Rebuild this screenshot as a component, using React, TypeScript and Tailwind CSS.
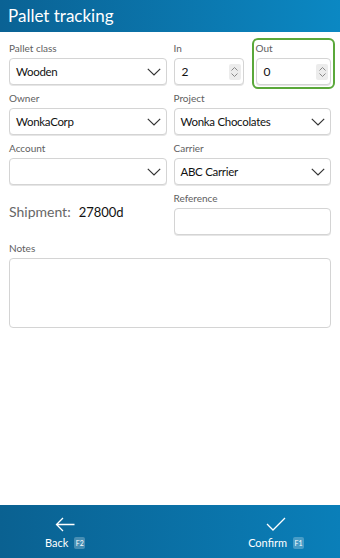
import React from 'react';

const font = { fontFamily: 'Lato, "Noto Sans", sans-serif' };

const Chevron = () => (
  <svg width="14" height="8" viewBox="0 0 14 8" fill="none" stroke="#333" strokeWidth="1.2">
    <path d="M0.8 0.8 L7 7 L13.2 0.8" />
  </svg>
);

const Spinner = () => (
  <div className="w-[12px] h-[16px] bg-[#ececec] rounded-[2px] flex flex-col items-center justify-center gap-[2px]">
    <svg width="7" height="4" viewBox="0 0 7 4" fill="none" stroke="#888" strokeWidth="1">
      <path d="M0.5 3.5 L3.5 0.5 L6.5 3.5" />
    </svg>
    <svg width="7" height="4" viewBox="0 0 7 4" fill="none" stroke="#888" strokeWidth="1">
      <path d="M0.5 0.5 L3.5 3.5 L6.5 0.5" />
    </svg>
  </div>
);

const Label = ({ children }: { children: React.ReactNode }) => (
  <div className="text-[10px] text-[#606060] leading-[14px] h-[14px] mb-[3px]">{children}</div>
);

const boxCls = 'h-[27px] border border-[#d4d4d4] rounded-[4px] bg-white flex items-center shadow-[0_1px_0_#e6e6e6]';

const Select = ({ value }: { value?: string }) => (
  <div className={`${boxCls} pl-[6px] pr-[5px] justify-between`}>
    <span className="text-[11.5px] tracking-[-0.3px] text-[#111]">{value}</span>
    <Chevron />
  </div>
);

const NumberInput = ({ value }: { value: string }) => (
  <div className={`${boxCls} pl-[7px] pr-[2px] justify-between`}>
    <span className="text-[12px] text-[#111]">{value}</span>
    <Spinner />
  </div>
);

export default function App() {
  return (
    <div className="w-[340px] h-[558px] bg-white flex flex-col" style={font}>
      <header className="h-[32px] bg-gradient-to-r from-[#0a6294] to-[#0b88c3] flex items-center px-[8px]">
        <h1 className="text-white text-[17px] leading-none pb-[1px]">Pallet tracking</h1>
      </header>

      <main className="flex-1 px-[9px] pt-[9px]">
        <div className="grid grid-cols-2 gap-x-[7px]">
          <div>
            <Label>Pallet class</Label>
            <Select value="Wooden" />
          </div>
          <div className="flex gap-[12px]">
            <div className="w-[70px]">
              <Label>In</Label>
              <NumberInput value="2" />
            </div>
            <div className="flex-1 -mt-[3px] -mx-[4px] -mb-[4px] pt-[1px] px-[2px] pb-[2px] border-2 border-[#5aa83a] rounded-[6px]">
              <Label>Out</Label>
              <NumberInput value="0" />
            </div>
          </div>

          <div className="mt-[6px]">
            <Label>Owner</Label>
            <Select value="WonkaCorp" />
          </div>
          <div className="mt-[6px]">
            <Label>Project</Label>
            <Select value="Wonka Chocolates" />
          </div>

          <div className="mt-[6px]">
            <Label>Account</Label>
            <Select />
          </div>
          <div className="mt-[6px]">
            <Label>Carrier</Label>
            <Select value="ABC Carrier" />
          </div>

          <div className="mt-[6px] flex items-start pt-[11px] leading-[20px]">
            <span className="text-[14px] text-[#666]">Shipment:</span>
            <span className="text-[13px] text-[#111] ml-[8px]">27800d</span>
          </div>
          <div className="mt-[6px]">
            <Label>Reference</Label>
            <div className={boxCls} />
          </div>
        </div>

        <div className="mt-[6px]">
          <Label>Notes</Label>
          <div className="h-[70px] border border-[#d4d4d4] rounded-[4px] bg-white" />
        </div>
      </main>

      <footer className="h-[53px] bg-gradient-to-r from-[#0a6191] to-[#0a7fb9] flex items-start justify-between pl-[45px] pr-[36px] pt-[12px] text-white">
        <div className="flex flex-col items-center">
          <svg width="20" height="15" viewBox="0 0 20 15" fill="none" stroke="white" strokeWidth="1.3">
            <path d="M19.5 7.5 H1.5 M8 1 L1.5 7.5 L8 14" />
          </svg>
          <div className="flex items-center gap-[6px] mt-[3px]">
            <span className="text-[11px]">Back</span>
            <span className="text-[7px] w-[11px] h-[12px] flex items-center justify-center bg-white/25 rounded-[2px]">F2</span>
          </div>
        </div>
        <div className="flex flex-col items-center">
          <svg width="20" height="14" viewBox="0 0 20 14" fill="none" stroke="white" strokeWidth="1.3">
            <path d="M1 7 L7 13 L19 1" />
          </svg>
          <div className="flex items-center gap-[6px] mt-[4px]">
            <span className="text-[11px]">Confirm</span>
            <span className="text-[7px] w-[11px] h-[12px] flex items-center justify-center bg-white/25 rounded-[2px]">F1</span>
          </div>
        </div>
      </footer>
    </div>
  );
}
